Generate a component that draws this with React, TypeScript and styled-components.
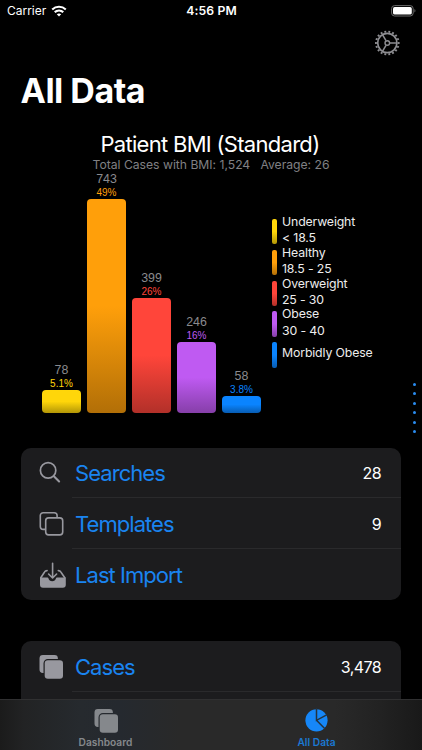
import React from "react";
import styled, { createGlobalStyle } from "styled-components";

const GlobalStyle = createGlobalStyle`
  *, *::before, *::after { box-sizing: border-box; }
  html, body { margin: 0; padding: 0; background: #000; }
  body { overflow: hidden; }
`;

const Screen = styled.div`
  position: relative;
  display: flex;
  flex-direction: column;
  width: 422px;
  height: 750px;
  overflow: hidden;
  background: #000;
  color: #fff;
  font-family: Inter, "Liberation Sans", sans-serif;
  white-space: pre;
`;

const StatusBar = styled.header`
  display: grid;
  grid-template-columns: 1fr auto 1fr;
  align-items: center;
  height: 22px;
  flex: none;
  padding: 0 6px 0 7px;
`;

const Carrier = styled.div`
  display: flex;
  align-items: center;
  gap: 5px;
  font-size: 12px;
  letter-spacing: -0.02px;
  line-height: 22px;
`;

const Clock = styled.div`
  font-size: 12.2px;
  font-weight: 600;
  letter-spacing: 0.15px;
  line-height: 22px;
`;

const BatterySlot = styled.div`
  display: flex;
  justify-content: flex-end;
`;

const NavBar = styled.nav`
  display: flex;
  justify-content: flex-end;
  align-items: center;
  height: 42px;
  flex: none;
  padding-right: 22px;
`;

const PageTitle = styled.h1`
  margin: 0;
  padding-left: 20.5px;
  height: 68px;
  flex: none;
  font-size: 34px;
  font-weight: 700;
  letter-spacing: -0.5px;
  line-height: 53px;
`;

const ChartSection = styled.section`
  display: flex;
  flex-direction: column;
  height: 315.7px;
  flex: none;
`;

const ChartTitle = styled.h2`
  margin: 0;
  height: 25px;
  font-size: 22px;
  font-weight: 400;
  letter-spacing: -0.71px;
  line-height: 25px;
  text-align: center;
  padding-right: 2px;
`;

const ChartSubtitle = styled.div`
  height: 15px;
  color: #808084;
  font-size: 12.2px;
  letter-spacing: -0.02px;
  line-height: 15px;
  text-align: center;
`;

const ChartBody = styled.div`
  display: flex;
  height: 241px;
  padding-left: 42px;
`;

const Bars = styled.div`
  display: flex;
  align-items: flex-end;
  gap: 6px;
  width: 219px;
`;

const BarColumn = styled.div`
  display: flex;
  flex-direction: column;
  align-items: center;
  width: 39px;
`;

const BarCount = styled.div`
  color: #8a8a8e;
  font-family: "Liberation Sans", Arial, sans-serif;
  font-size: 12.4px;
  line-height: 13px;
`;

const BarPercent = styled.div<{ $color: string }>`
  color: ${(p) => p.$color};
  font-family: "Liberation Sans", Arial, sans-serif;
  font-size: 10px;
  line-height: 13px;
`;

const Bar = styled.div<{ $color: string; $dark: string; $height: number }>`
  width: 39px;
  height: ${(p) => p.$height}px;
  border-radius: 4px;
  background: linear-gradient(${(p) => p.$color} 50%, ${(p) => p.$dark});
`;

const Legend = styled.div`
  display: flex;
  flex-direction: column;
  padding: 42.6px 0 0 11px;
`;

const LegendItem = styled.div`
  display: flex;
  align-items: center;
  gap: 5px;
  height: 30.9px;
`;

const Swatch = styled.div<{ $color: string; $dark: string }>`
  width: 5px;
  height: 25.5px;
  margin-top: 3px;
  border-radius: 2px;
  background: linear-gradient(${(p) => p.$color} 50%, ${(p) => p.$dark});
`;

const LegendText = styled.div`
  font-size: 12.3px;
  letter-spacing: -0.14px;
  line-height: 16.3px;
  color: #ededed;
`;

const Card = styled.section`
  width: 380px;
  flex: none;
  margin: 0 21px 41.2px;
  border-radius: 10px;
  background: #1c1c1e;
`;

const Row = styled.div`
  display: grid;
  grid-template-columns: 54px 1fr auto;
  align-items: center;
  height: 50.8px;
  padding-right: 20px;
  background: linear-gradient(#2a2a2c, #2a2a2c) 51px 100% / 329px 1px no-repeat;
  &:last-child { background: none; }
`;

const RowIcon = styled.div`
  display: flex;
  padding-left: 17px;
  color: #98989f;
`;

const RowLabel = styled.div`
  color: #1a84f0;
  font-size: 22px;
  letter-spacing: -0.95px;
  line-height: 30px;
`;

const RowValue = styled.div`
  font-size: 16px;
  letter-spacing: -0.6px;
  line-height: 30px;
`;

const PageDots = styled.div`
  position: absolute;
  left: 412.5px;
  top: 382.5px;
  display: flex;
  flex-direction: column;
  gap: 6.5px;
`;

const Dot = styled.i`
  width: 3px;
  height: 3px;
  border-radius: 50%;
  background: #2a8cf0;
`;

const TabBar = styled.footer`
  position: absolute;
  inset: 699px 0 0 0;
  display: grid;
  grid-template-columns: 1fr 1fr;
  background: linear-gradient(90deg, #1b1b1b 0, #222324 24px, #262a2e 80px, #25292f 120px, #292929 180px, #292929 335px, #222 380px, #191919 100%);
  border-top: 1px solid #303031;
`;

const Tab = styled.div<{ $color: string }>`
  display: flex;
  flex-direction: column;
  align-items: center;
  padding-top: 8px;
  gap: 2px;
  color: ${(p) => p.$color};
  font-size: 10.2px;
  font-weight: 600;
  letter-spacing: 0.02px;
  line-height: 13px;
`;

const WifiIcon = () => (
  <svg width="16" height="12" viewBox="0 0 16 12" fill="none" stroke="#fff" strokeWidth="2.1">
    <path d="M1.200 4.400C5 .9 11 .9 14.800 4.400M3.700 7.100c2.500-2.100 6.100-2.100 8.600 0" />
    <path d="M8 11.500 5.800 9.200c1.200-1 3.200-1 4.400 0z" fill="#fff" stroke="none" />
  </svg>
);

const BatteryIcon = () => (
  <svg width="25" height="12" viewBox="0 0 25 12">
    <rect x="0.6" y="0.6" width="21.6" height="10.4" rx="3" fill="none" stroke="#6b6b6b" />
    <rect x="2" y="2" width="18.8" height="7.6" rx="1.7" fill="#fff" />
    <path d="M23.500 4c1.200.6 1.200 3 0 3.600z" fill="#777" />
  </svg>
);

const teeth = Array.from({ length: 18 }, (_, i) => i * 20);

const GearIcon = () => (
  <svg width="26" height="26" viewBox="-13.3 -13 26 26" fill="none" stroke="#8e8e92">
    <circle r="9.6" strokeWidth="1.7" />
    <circle r="2.3" strokeWidth="1.4" />
    {teeth.map((a) => (
      <path key={a} d="M10.400 0H12.300" strokeWidth="1.9" transform={`rotate(${a})`} />
    ))}
    {[0, 120, 240].map((a) => (
      <path key={a} d="M2.600 0H9.400" strokeWidth="1.5" transform={`rotate(${a})`} />
    ))}
  </svg>
);

const SearchIcon = () => (
  <svg width="26" height="26" viewBox="0 0 26 26" fill="none" stroke="currentColor" strokeLinecap="round">
    <circle cx="10.1" cy="10.4" r="7.7" strokeWidth="1.7" />
    <path d="m15.900 16.200 5.200 5.200" strokeWidth="2.1" />
  </svg>
);

const StackOutlineIcon = () => (
  <svg width="26" height="26" viewBox="0 0 26 26" fill="none" stroke="currentColor" strokeWidth="1.6">
    <path d="M7.600 18.400H5.200a2.900 2.900 0 0 1-2.900-2.900V4.600a2.900 2.900 0 0 1 2.900-2.900h11a2.900 2.900 0 0 1 2.900 2.900v2.200" />
    <rect x="7.7" y="6.9" width="17" height="17" rx="2.9" />
  </svg>
);

const StackFilledIcon = () => (
  <svg width="26" height="26" viewBox="0 0 26 26" fill="currentColor">
    <path d="M4.900 1h11.600a3.400 3.400 0 0 1 3.400 3.400V5H9.900A4.400 4.400 0 0 0 5.500 9.400v9.500h-.6a3.400 3.400 0 0 1-3.400-3.400V4.400A3.400 3.400 0 0 1 4.900 1z" />
    <rect x="6.7" y="6.300" width="18.300" height="18.500" rx="3.200" />
  </svg>
);

const ImportIcon = () => (
  <svg width="28" height="28" viewBox="0 0 28 28" fill="none" stroke="currentColor" strokeLinecap="round" strokeLinejoin="round">
    <path d="M2 16.500h7.500c.5 0 .8.300.9.800.5 1.800 1.900 2.900 3.800 2.900s3.300-1.100 3.800-2.900c.1-.5.400-.8.900-.8h8.900v7.200a3 3 0 0 1-3 3H5a3 3 0 0 1-3-3z" fill="currentColor" stroke="none" />
    <path d="M2.800 16.800 6.400 11.200C7.100 10 7.800 9.600 9.100 9.600M26.800 16.800l-3.800-5.600c-.7-1.200-1.400-1.600-2.700-1.600" strokeWidth="1.600" />
    <path d="M14.600 2.300V16.600M10.600 13 14.600 17l4-4" strokeWidth="1.600" />
  </svg>
);

const PieIcon = () => (
  <svg width="24" height="26" viewBox="0 0 24 26">
    <circle cx="11.5" cy="12.3" r="11.1" fill="#1687f8" />
    <path d="M11.500 0v12.300l10.600-5.600M11.500 12.300l8.400 8.400" fill="none" stroke="#24333f" strokeWidth="1.500" />
  </svg>
);

const categories = [
  { name: "Underweight\n< 18.5", count: "78", percent: "5.1%", color: "#ffd60a", dark: "#b29607", height: 23 },
  { name: "Healthy\n18.5 - 25", count: "743", percent: "49%", color: "#ff9f0a", dark: "#b26f07", height: 214 },
  { name: "Overweight\n25 - 30", count: "399", percent: "26%", color: "#ff453a", dark: "#b23029", height: 115 },
  { name: "Obese\n30 - 40", count: "246", percent: "16%", color: "#bf5af2", dark: "#863fa9", height: 71 },
  { name: "Morbidly Obese", count: "58", percent: "3.8%", color: "#0a84ff", dark: "#075cb2", height: 17 },
];

export default function App() {
  return (
    <Screen>
      <GlobalStyle />
      <StatusBar>
        <Carrier>Carrier<WifiIcon /></Carrier>
        <Clock>4:56 PM</Clock>
        <BatterySlot><BatteryIcon /></BatterySlot>
      </StatusBar>
      <NavBar><GearIcon /></NavBar>
      <PageTitle>All Data</PageTitle>
      <ChartSection>
        <ChartTitle>Patient BMI (Standard)</ChartTitle>
        <ChartSubtitle>{"Total Cases with BMI: 1,524   Average: 26"}</ChartSubtitle>
        <ChartBody>
          <Bars>
            {categories.map((c) => (
              <BarColumn key={c.name}>
                <BarCount>{c.count}</BarCount>
                <BarPercent $color={c.color}>{c.percent}</BarPercent>
                <Bar $color={c.color} $dark={c.dark} $height={c.height} />
              </BarColumn>
            ))}
          </Bars>
          <Legend>
            {categories.map((c) => (
              <LegendItem key={c.name}>
                <Swatch $color={c.color} $dark={c.dark} />
                <LegendText>{c.name}</LegendText>
              </LegendItem>
            ))}
          </Legend>
        </ChartBody>
      </ChartSection>
      <Card>
        <Row><RowIcon><SearchIcon /></RowIcon><RowLabel>Searches</RowLabel><RowValue>28</RowValue></Row>
        <Row><RowIcon><StackOutlineIcon /></RowIcon><RowLabel>Templates</RowLabel><RowValue>9</RowValue></Row>
        <Row><RowIcon><ImportIcon /></RowIcon><RowLabel>Last Import</RowLabel></Row>
      </Card>
      <Card>
        <Row><RowIcon><StackFilledIcon /></RowIcon><RowLabel>Cases</RowLabel><RowValue>3,478</RowValue></Row>
        <Row />
      </Card>
      <PageDots>
        <Dot /><Dot /><Dot /><Dot /><Dot /><Dot />
      </PageDots>
      <TabBar>
        <Tab $color="#85888c"><StackFilledIcon />Dashboard</Tab>
        <Tab $color="#1b78d2"><PieIcon />All Data</Tab>
      </TabBar>
    </Screen>
  );
}
